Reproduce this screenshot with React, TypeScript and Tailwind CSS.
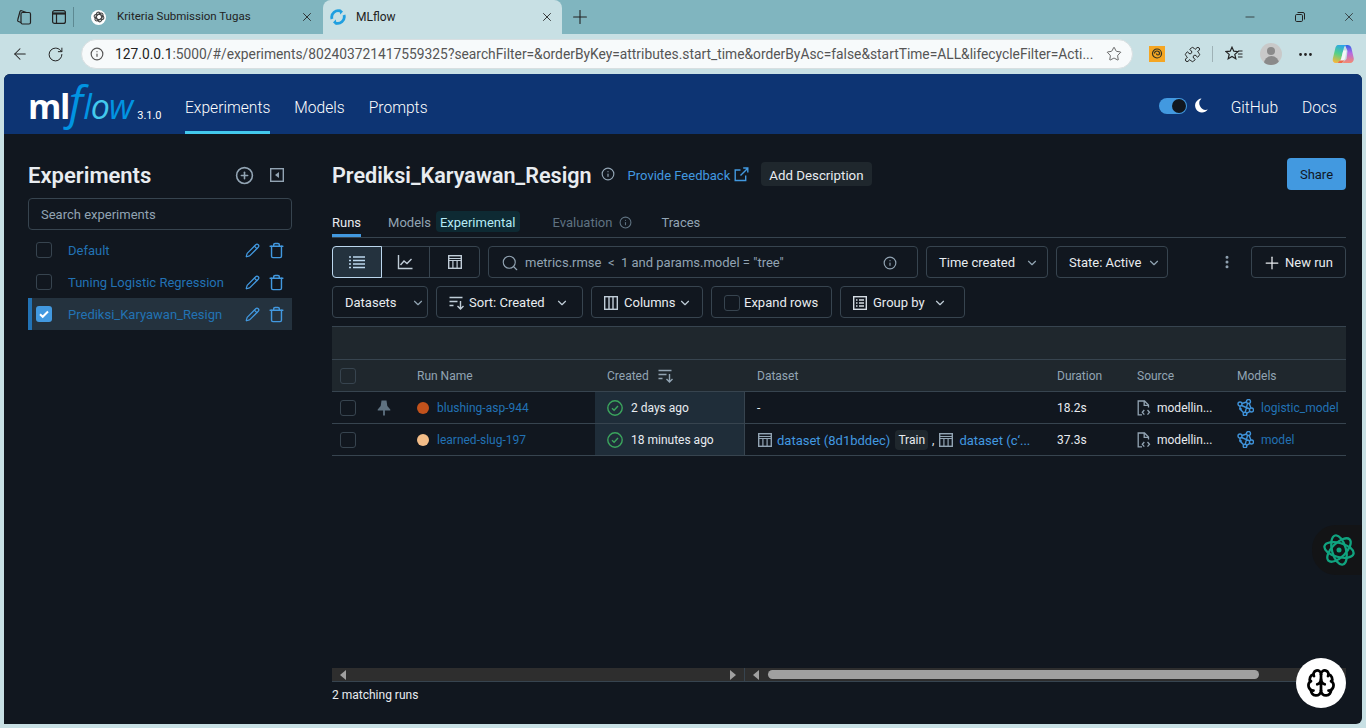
import React from "react";
import {
  Search, Info, Pencil, Trash, CirclePlus, ChevronDown, Plus, X, ArrowLeft, RotateCw, Star, Puzzle, Brain, EllipsisVertical, Ellipsis, Minus,
} from "lucide-react";

const TableIcon = ({ s = 16, c = "currentColor" }: { s?: number; c?: string }) => (
  <svg width={s} height={s} viewBox="0 0 16 16" fill="none" stroke={c} strokeWidth="1.4" className="shrink-0">
    <rect x="1.700" y="1.700" width="12.600" height="12.600" />
    <path d="M1.700 4.500h12.600M1.700 6.500h12.600M5.900 6.500v7.800M10.100 6.500v7.800" strokeWidth="1.200" />
  </svg>
);
const ListIcon = () => (
  <svg width="18" height="16" viewBox="0 0 18 16" fill="none" stroke="#bcd7ee" strokeWidth="1.4">
    <path d="M5 3h12M5 6.500h12M5 10h12M5 13.500h12M1 3h2M1 6.500h2M1 10h2M1 13.500h2" />
  </svg>
);
const ChartIcon = () => (
  <svg width="16" height="16" viewBox="0 0 16 16" fill="none" stroke="#c0cdd8" strokeWidth="1.4">
    <path d="M1.500 1v13.500H15.500" />
    <path d="M3.500 11l3.500-4 3 2.500 4.500-4.500" />
  </svg>
);
const SortIcon = ({ c = "#c0cdd8" }: { c?: string }) => (
  <svg width="16" height="14" viewBox="0 0 16 14" fill="none" stroke={c} strokeWidth="1.400" className="shrink-0">
    <path d="M0.500 1.500h13M0.500 5.500h8M0.500 9.500h4" />
    <path d="M11.500 5v8M8.500 10l3 3 3-3" />
  </svg>
);
const ColumnsIcon = () => (
  <svg width="14" height="14" viewBox="0 0 14 14" fill="none" stroke="#c0cdd8" strokeWidth="1.400" className="shrink-0">
    <rect x="0.700" y="0.700" width="12.600" height="12.600" />
    <path d="M5 0.700v12.600M9 0.700v12.600" />
  </svg>
);
const GroupIcon = () => (
  <svg width="14" height="14" viewBox="0 0 14 14" fill="none" stroke="#d5dde4" strokeWidth="1.400" className="shrink-0">
    <rect x="0.700" y="0.700" width="12.600" height="12.600" />
    <path d="M3 4h1.500M6 4h5M3 7h1.500M6 7h5M3 10h1.500M6 10h5" />
  </svg>
);
const ExternalIcon = () => (
  <svg width="15" height="15" viewBox="0 0 15 15" fill="none" stroke="#4299e0" strokeWidth="1.400">
    <path d="M11.700 8.500v5H1.200V3h5.300" />
    <path d="M6.500 8.500L13.800 1.200M9.200 1h4.600v4.600" />
  </svg>
);
const CollapseIcon = () => (
  <svg width="14" height="14" viewBox="0 0 14 14" className="shrink-0">
    <rect x="0.700" y="0.700" width="12.600" height="12.600" fill="none" stroke="#92a4b3" strokeWidth="1.400" />
    <path d="M9 4v6L5 7z" fill="#92a4b3" />
  </svg>
);
const PinIcon = () => (
  <svg width="14" height="16" viewBox="0 0 14 16" fill="#5f7281">
    <path d="M4.500 0.500h5l0.800 5.500 3 3.500v1H0.700v-1l3-3.500z" />
    <rect x="6.100" y="10" width="1.800" height="5.500" />
  </svg>
);
const CheckOk = () => (
  <svg width="16" height="16" viewBox="0 0 16 16" fill="none" stroke="#3ba55d" strokeWidth="1.400" className="shrink-0">
    <circle cx="8" cy="8" r="7.200" />
    <path d="M5 8.300l2.100 2L11 6" />
  </svg>
);
const SourceIcon = () => (
  <svg width="14" height="16" viewBox="0 0 14 16" fill="none" stroke="#92a4b3" strokeWidth="1.300" className="shrink-0">
    <path d="M5 14.800H1.200V1h6.300l4 4v2.500" />
    <path d="M7.200 1v4.300h4.300" />
    <path d="M7.300 10l-2 2.300 2 2.300M10.500 10l2 2.300-2 2.300" />
  </svg>
);
const ModelIcon = () => (
  <svg width="17" height="17" viewBox="0 0 17 17" fill="none" stroke="#3f93da" strokeWidth="1.400" className="shrink-0">
    <circle cx="3" cy="5" r="2" />
    <circle cx="11.500" cy="2.500" r="2" />
    <circle cx="14.500" cy="11" r="2" />
    <circle cx="8" cy="15" r="1.800" />
    <circle cx="3.500" cy="10" r="0.600" />
    <path d="M5 4.500l4.500-1.500M12.200 4.500l1.700 4.500M13 12.300l-3.500 2M6.600 13.800L3.500 10.500M3 7v3M4.500 6.500L13 10M10.500 4.300L8.300 13.200" />
  </svg>
);
const AtomIcon = () => (
  <svg width="32" height="34" viewBox="0 0 32 34" fill="none" stroke="#10a37f" strokeWidth="2.300">
    <ellipse cx="16" cy="17" rx="15" ry="7" transform="rotate(15 16 17)" />
    <ellipse cx="16" cy="17" rx="15" ry="7" transform="rotate(75 16 17)" />
    <ellipse cx="16" cy="17" rx="15" ry="7" transform="rotate(135 16 17)" />
    <circle cx="16" cy="17" r="2.500" fill="#10a37f" stroke="none" />
  </svg>
);
const Knot = () => (
  <span className="flex h-[15px] w-[15px] items-center justify-center rounded-full bg-white">
    <svg width="12" height="12" viewBox="0 0 32 34" fill="none" stroke="#444" strokeWidth="3">
      <ellipse cx="16" cy="17" rx="14" ry="7" transform="rotate(15 16 17)" />
      <ellipse cx="16" cy="17" rx="14" ry="7" transform="rotate(75 16 17)" />
      <ellipse cx="16" cy="17" rx="14" ry="7" transform="rotate(135 16 17)" />
    </svg>
  </span>
);
const Spinner = () => (
  <svg width="16" height="16" viewBox="0 0 16 16" fill="none" stroke="#1f9fe0" strokeWidth="2.800">
    <path d="M2 10A6.500 6.500 0 0 1 11 2.300" />
    <path d="M14 6A6.500 6.500 0 0 1 5 13.700" />
    <path d="M9.500 0l3.500 2.500-2.800 3z" fill="#1f9fe0" stroke="none" />
    <path d="M6.500 16L3 13.500l2.800-3z" fill="#1f9fe0" stroke="none" />
  </svg>
);
const Copilot = () => (
  <svg width="22" height="22" viewBox="0 0 22 22">
    <defs>
      <linearGradient id="cp1" x1="0.600" y1="0" x2="0.300" y2="1">
        <stop offset="0" stopColor="#2aa5e8" />
        <stop offset="0.500" stopColor="#52d08a" />
        <stop offset="1" stopColor="#f5b83a" />
      </linearGradient>
      <linearGradient id="cp2" x1="0.500" y1="0" x2="0.500" y2="1">
        <stop offset="0" stopColor="#2d62e8" />
        <stop offset="0.450" stopColor="#b56ae2" />
        <stop offset="1" stopColor="#f58a70" />
      </linearGradient>
    </defs>
    <path d="M13 2h2.500c2 0 3.300 1 3.900 3l2.300 10c.5 2.700-1 5-3.700 5h-7.500l4-4 1-8z" fill="url(#cp2)" />
    <path d="M6 2h9c-1.500 0-2.500 1-3 2.500L9 16c-.6 2.500-2 4-4.500 4H4c-2.500 0-3.700-2-3.200-4.300L3 6.500C3.500 3.500 4.500 2 6 2z" fill="url(#cp1)" />
    <path d="M11.200 7.500h3.300l-1.300 7c-.3 1.500-1 3-2.500 3H7.500c1 0 1.700-1 2-2.500z" fill="#f4f6f8" />
    <path d="M8 17.500h4.500L10 20H5.500z" fill="#ef6a4a" />
  </svg>
);
const FavStar = () => (
  <svg width="18" height="16" viewBox="0 0 18 16" fill="none" stroke="#222" strokeWidth="1.200">
    <path d="M7 1.200l1.800 4 4.200.4-3.200 2.800 1 4.300L7 10.400l-3.800 2.300 1-4.300L1 5.600l4.200-.4z" />
    <path d="M13 5h4.500M13 8h4.500M13 11h4.500" />
  </svg>
);
const TabsIcon = () => (
  <svg width="16" height="16" viewBox="0 0 16 16" fill="none" stroke="#222" strokeWidth="1.200">
    <rect x="5" y="3.500" width="9.500" height="11.500" rx="1.500" />
    <path d="M5 13.500l-2.500-1a1.200 1.200 0 0 1-.8-1.500L4 2.500A1.200 1.200 0 0 1 5.500 1.700l5 1.800" />
  </svg>
);
const WindowIcon = () => (
  <svg width="14" height="14" viewBox="0 0 14 14" fill="none" stroke="#222" strokeWidth="1.200">
    <rect x="0.600" y="0.600" width="12.800" height="12.800" rx="2" />
    <path d="M0.600 3.500h12.800" strokeWidth="2.200" />
    <path d="M4.500 3.500v9.900" />
  </svg>
);
const RestoreIcon = () => (
  <svg width="10" height="10" viewBox="0 0 10 10" fill="none" stroke="#222" strokeWidth="1">
    <rect x="0.500" y="2.500" width="7" height="7" rx="1.200" />
    <path d="M2.500 .5h5.500a1.500 1.500 0 0 1 1.500 1.500v5.500" />
  </svg>
);
const Crescent = () => (
  <svg width="14" height="15" viewBox="0 0 14 15" fill="#fff" className="shrink-0">
    <path d="M7.500 0.500A7 7 0 1 0 13.800 11.500 6.500 6.500 0 0 1 7.500 0.500z" />
  </svg>
);

const Box = ({ checked = false }: { checked?: boolean }) =>
  checked ? (
    <span className="flex h-4 w-4 shrink-0 items-center justify-center rounded-[3px] bg-[#4299e0]">
      <svg width="12" height="12" viewBox="0 0 12 12" fill="none" stroke="#fff" strokeWidth="2">
        <path d="M2 6.300l2.700 2.500L10 3.500" />
      </svg>
    </span>
  ) : (
    <span className="h-4 w-4 shrink-0 rounded-[3px] border border-[#37444f]" />
  );

const Btn = ({ w, children, className = "" }: { w: string; children: React.ReactNode; className?: string }) => (
  <div className={`flex h-8 items-center rounded border border-[#37444f] pt-px text-[13px] text-[#e8ecf0] ${w} ${className}`}>{children}</div>
);

const Exp = ({ name, active = false }: { name: string; active?: boolean }) => (
  <div className={`flex h-8 items-center ${active ? "border-l-4 border-[#2272b4] bg-[#24323e] pl-1" : "pl-2"} pr-[7px]`}>
    <Box checked={active} />
    <span className="ml-4 flex-1 pt-[2px] text-[13px] text-[#2272b4]">{name}</span>
    <Pencil size={15} color="#4299e0" className="mr-[8px]" />
    <Trash size={17} color="#4299e0" />
  </div>
);

const Row = ({
  dot, name, pin = false, created, dataset, dur, model,
}: { dot: string; name: string; pin?: boolean; created: string; dataset: React.ReactNode; dur: string; model: string }) => (
  <div className="flex h-8 items-stretch border-b border-[#37444f] text-xs text-[#e8ecf0]">
    <div className="flex w-10 items-center pl-2"><Box /></div>
    <div className="flex w-[33px] items-center pl-[5px]">{pin && <PinIcon />}</div>
    <div className="flex w-[190px] items-center pl-3">
      <span className="h-3 w-3 rounded-full" style={{ backgroundColor: dot }} />
      <span className="ml-2 text-[#2272b4]">{name}</span>
    </div>
    <div className="flex w-[150px] items-center border-r border-[#37444f] bg-[#1f2d39] pl-3">
      <CheckOk />
      <span className="ml-2">{created}</span>
    </div>
    <div className="flex w-[300px] items-center pl-3">{dataset}</div>
    <div className="flex w-20 items-center pl-3">{dur}</div>
    <div className="flex w-[100px] items-center pl-3">
      <SourceIcon />
      <span className="ml-[6px]">modellin...</span>
    </div>
    <div className="flex flex-1 items-center pl-3">
      <ModelIcon />
      <span className="ml-[7px] text-[#2272b4]">{model}</span>
    </div>
  </div>
);

export default function App() {
  return (
    <div className="relative flex h-[728px] w-[1366px] flex-col overflow-hidden bg-[#c8e0e4] font-['Roboto','Liberation_Sans',sans-serif]">
      {/* Tab strip */}
      <div className="flex h-[34px] items-end bg-[#80b5bf] text-[11.500px] text-[#222]">
        <div className="flex h-full w-[73px] items-center pl-4">
          <TabsIcon />
          <span className="ml-5"><WindowIcon /></span>
        </div>
        <div className="mb-[7px] h-5 w-px bg-[#5d8992]" />
        <div className="flex h-full w-[249px] items-center pl-[17px] pr-[9px]">
          <Knot />
          <span className="ml-[11px] flex-1">Kriteria Submission Tugas</span>
          <X size={14} strokeWidth={1.500} />
        </div>
        <div className="flex h-[34px] w-[239px] items-center rounded-t-lg bg-[#c8e0e4] pl-[7px] pr-[8px]">
          <Spinner />
          <span className="ml-[10px] flex-1 text-xs">MLflow</span>
          <X size={14} strokeWidth={1.500} />
        </div>
        <div className="flex h-full items-center pl-[7px]"><Plus size={22} strokeWidth={1.200} /></div>
        <div className="flex h-full flex-1 items-center justify-end pr-[10px]">
          <Minus size={14} strokeWidth={1.300} className="mr-[38px]" />
          <span className="mr-[37px]"><RestoreIcon /></span>
          <X size={14} strokeWidth={1.300} />
        </div>
      </div>
      {/* Address bar */}
      <div className="flex h-10 items-center text-[#222]">
        <div className="flex w-[81px] items-center pl-[11px]">
          <ArrowLeft size={18} strokeWidth={1.400} />
          <RotateCw size={17} strokeWidth={1.400} className="ml-[18px]" />
        </div>
        <div className="flex h-[30px] w-[1052px] items-center rounded-full border border-[#d8dfe1] bg-[#f7fafb] pl-[8px] pr-[10px]">
          <Info size={14} color="#555" />
          <span className="ml-[11px] flex-1 truncate text-[13.800px] text-[#222]">
            127.0.0.1<span className="text-[#555]">:5000/#/experiments/802403721417559325?searchFilter=&amp;orderByKey=attributes.start_time&amp;orderByAsc=false&amp;startTime=ALL&amp;lifecycleFilter=Acti...</span>
          </span>
          <Star size={16} strokeWidth={1.200} color="#444" className="ml-2" />
        </div>
        <div className="flex flex-1 items-center pl-4">
          <span className="flex h-4 w-4 items-center justify-center bg-[#f5a623]">
            <svg width="12" height="12" viewBox="0 0 12 12" fill="none" stroke="#332" strokeWidth="1.200">
              <circle cx="6" cy="5.500" r="4.500" />
              <path d="M3.500 5.500a2.500 2.500 0 0 1 5 0a1.500 1.500 0 0 1-3 0" />
            </svg>
          </span>
          <Puzzle size={17} strokeWidth={1.400} className="ml-[19px]" />
          <span className="ml-[11px] h-4 w-px bg-[#9fb2b6]" />
          <span className="ml-[12px]"><FavStar /></span>
          <span className="relative ml-[17px] flex h-[22px] w-[22px] items-center justify-center overflow-hidden rounded-full bg-[#c9c9c9]">
            <span className="absolute top-[4px] h-2 w-2 rounded-full bg-[#8a8a8a]" />
            <span className="absolute top-[13px] h-3 w-[15px] rounded-t-full bg-[#8a8a8a]" />
          </span>
          <Ellipsis size={17} className="ml-[15px]" />
          <span className="ml-[18px]"><Copilot /></span>
        </div>
      </div>
      {/* Page */}
      <div className="mx-1 mb-1 flex flex-1 flex-col overflow-hidden rounded-t-md rounded-br-md bg-[#11171f]">
        <header className="flex h-[60px] items-center bg-[#0d3473] pl-6 pr-[25px] pt-1 text-white">
          <div className="-mt-[9px] flex w-[157px] items-baseline">
            <span className="font-['Open_Sans',sans-serif] text-[34px] font-bold leading-none tracking-[-1.500px]">ml</span>
            <span className="font-['Open_Sans',sans-serif] text-[46px] font-normal italic leading-none text-[#0194e2]">f</span>
            <span className="font-['Open_Sans',sans-serif] text-[34px] font-normal italic leading-none tracking-[-1px] text-[#0194e2]">l<span className="text-[#43c9ed]">o</span>w</span>
            <span className="ml-[5px] text-[11px]">3.1.0</span>
          </div>
          <nav className="flex h-full items-center gap-6 self-stretch text-[15.600px] font-light">
            <span className="flex h-full items-center border-b-[3px] border-[#43c9ed] pt-[9px]">Experiments</span>
            <span className="pt-[6px]">Models</span>
            <span className="pt-[6px]">Prompts</span>
          </nav>
          <div className="flex flex-1 items-center justify-end text-[15.600px] font-light">
            <span className="flex h-4 w-[28px] items-center justify-end rounded-full bg-[#4299e0] pr-[1px]">
              <span className="h-[14px] w-[14px] rounded-full bg-[#11171f]" />
            </span>
            <span className="ml-[7px]"><Crescent /></span>
            <span className="ml-[23px] pt-[6px]">GitHub</span>
            <span className="ml-6 pt-[6px]">Docs</span>
          </div>
        </header>
        <div className="flex flex-1 pl-6 pr-4 text-[#e8ecf0]">
          {/* Sidebar */}
          <aside className="w-[264px] pt-6">
            <div className="flex h-[34px] items-center pr-2">
              <h2 className="flex-1 pt-[2px] text-[22px] font-semibold leading-none">Experiments</h2>
              <CirclePlus size={19} color="#92a4b3" className="mr-[16px]" />
              <CollapseIcon />
            </div>
            <div className="mt-[6px] flex h-8 items-center rounded border border-[#37444f] pl-3 pt-[2px] text-[13px] text-[#92a4b3]">Search experiments</div>
            <div className="mt-[4px]">
              <Exp name="Default" />
              <Exp name="Tuning Logistic Regression" />
              <Exp name="Prediksi_Karyawan_Resign" active />
            </div>
          </aside>
          {/* Main */}
          <main className="ml-10 flex flex-1 flex-col">
            <div className="mt-6 flex h-8 items-center">
              <h1 className="pt-[3px] text-[21.600px] font-semibold leading-none">Prediksi_Karyawan_Resign</h1>
              <Info size={14} color="#92a4b3" className="ml-[9px]" />
              <span className="ml-[13px] pt-[3px] text-[13px] text-[#4299e0]">Provide Feedback</span>
              <span className="ml-[4px]"><ExternalIcon /></span>
              <span className="ml-[12px] flex h-6 items-center rounded bg-[#1f272d] px-2 pt-[3px] text-[13.300px]">Add Description</span>
              <span className="ml-auto flex h-8 w-[59px] items-center justify-center rounded bg-[#4299e0] pt-px text-[13px] text-[#11171f]">Share</span>
            </div>
            <div className="mt-[16px] flex h-[32px] items-stretch border-b border-[#37444f] text-[13px]">
              <span className="flex items-center border-b-[3px] border-[#4299e0] pt-[5px]">Runs</span>
              <span className="ml-[27px] flex items-center pt-[2px] text-[#92a4b3]">Models</span>
              <span className="mb-[5px] ml-[5px] mt-[5px] flex items-center rounded bg-[#0e2a33] px-1 pt-[2px] text-[#b5eaf5]">Experimental</span>
              <span className="ml-[33px] flex items-center pt-[2px] text-[#5f7281]">Evaluation<Info size={13} className="ml-[7px]" /></span>
              <span className="ml-[29px] flex items-center pt-[2px] text-[#92a4b3]">Traces</span>
            </div>
            <div className="mt-2 flex h-8 items-center">
              <div className="flex h-8 w-[148px] rounded border border-[#37444f]">
                <span className="-m-px flex w-[50px] items-center justify-center rounded-l border border-[#bcd7ee] bg-[#24323e]"><ListIcon /></span>
                <span className="flex w-[49px] items-center justify-center border-r border-[#37444f]"><ChartIcon /></span>
                <span className="flex flex-1 items-center justify-center"><TableIcon c="#c0cdd8" /></span>
              </div>
              <Btn w="w-[430px]" className="ml-2 pl-[12px] pr-[20px]">
                <Search size={18} strokeWidth={1.500} color="#92a4b3" />
                <span className="ml-[6px] flex-1 text-[#92a4b3]">metrics.rmse &nbsp;&lt;&nbsp; 1 and params.model = "tree"</span>
                <Info size={14} color="#92a4b3" />
              </Btn>
              <Btn w="w-[122px]" className="ml-2 pl-3">Time created<ChevronDown size={14} color="#92a4b3" className="ml-[10px]" /></Btn>
              <Btn w="w-[112px]" className="ml-2 pl-3">State: Active<ChevronDown size={14} color="#92a4b3" className="ml-[6px]" /></Btn>
              <EllipsisVertical size={16} color="#92a4b3" strokeWidth={2.500} className="ml-[51px]" />
              <Btn w="w-[95px]" className="ml-4 pl-[10px]"><Plus size={20} strokeWidth={1.500} /><span className="ml-[3px]">New run</span></Btn>
            </div>
            <div className="mt-2 flex h-8 items-center gap-2">
              <Btn w="w-[96px]" className="pl-3">Datasets<ChevronDown size={14} color="#92a4b3" className="ml-[14px]" /></Btn>
              <Btn w="w-[147px]" className="pl-3"><SortIcon /><span className="ml-[4px]">Sort: Created</span><ChevronDown size={14} color="#c0cdd8" className="ml-[10px]" /></Btn>
              <Btn w="w-[112px]" className="pl-3"><ColumnsIcon /><span className="ml-[6px]">Columns</span><ChevronDown size={14} color="#c0cdd8" className="ml-[2px]" /></Btn>
              <Btn w="w-[121px]" className="pl-3"><Box /><span className="ml-[4px]">Expand rows</span></Btn>
              <Btn w="w-[125px]" className="pl-3"><GroupIcon /><span className="ml-[6px]">Group by</span><ChevronDown size={14} color="#c0cdd8" className="ml-[8px]" /></Btn>
            </div>
            {/* Table */}
            <div className="mt-2 flex flex-1 flex-col">
              <div className="h-[34px] border-y border-[#37444f] bg-[#1f272d]" />
              <div className="flex h-8 items-center border-b border-[#37444f] bg-[#1f272d] text-xs text-[#92a4b3]">
                <div className="flex w-[73px] pl-2"><Box /></div>
                <div className="w-[190px] pl-3">Run Name</div>
                <div className="flex w-[150px] items-center pl-3">Created<span className="ml-[9px]"><SortIcon c="#92a4b3" /></span></div>
                <div className="w-[300px] pl-3">Dataset</div>
                <div className="w-20 pl-3">Duration</div>
                <div className="w-[100px] pl-3">Source</div>
                <div className="flex-1 pl-3">Models</div>
              </div>
              <Row dot="#c2521c" name="blushing-asp-944" pin created="2 days ago" dataset="-" dur="18.2s" model="logistic_model" />
              <Row
                dot="#f3bd88"
                name="learned-slug-197"
                created="18 minutes ago"
                dur="37.3s"
                model="model"
                dataset={
                  <>
                    <TableIcon c="#92a4b3" />
                    <span className="ml-[4px] pt-[2px] text-[13px] text-[#4299e0]">dataset (8d1bddec)</span>
                    <span className="ml-[5px] flex h-5 items-center rounded bg-[#1f272d] px-[3px]">Train</span>
                    <span className="ml-[4px]">,</span>
                    <span className="ml-[4px]"><TableIcon c="#92a4b3" /></span>
                    <span className="ml-[5px] pt-[2px] text-[13px] text-[#4299e0]">dataset (c‘...</span>
                  </>
                }
              />
              <div className="flex-1" />
              <div className="flex h-[14px] border-b border-[#37444f] bg-[#2e2e2e]">
                <div className="flex w-[413px] items-center justify-between border-r border-[#37444f] px-2">
                  <span className="h-0 w-0 border-y-[5px] border-r-[6px] border-y-transparent border-r-[#a0a0a0]" />
                  <span className="h-0 w-0 border-y-[5px] border-l-[6px] border-y-transparent border-l-[#a0a0a0]" />
                </div>
                <div className="flex flex-1 items-center pl-2">
                  <span className="h-0 w-0 border-y-[5px] border-r-[6px] border-y-transparent border-r-[#a0a0a0]" />
                  <span className="ml-[9px] h-[9px] w-[491px] rounded-full bg-[#a0a0a0]" />
                </div>
              </div>
              <div className="flex h-[42px] items-start pt-[6px] text-xs leading-[14px]">2 matching runs</div>
            </div>
          </main>
        </div>
      </div>
      {/* Floating */}
      <div className="absolute left-[1312px] top-[525px] flex h-[50px] w-[50px] items-center justify-center rounded-l-3xl bg-[#131416] pl-[4px]">
        <AtomIcon />
      </div>
      <div className="absolute left-[1296px] top-[658px] flex h-[50px] w-[50px] items-center justify-center rounded-full bg-white">
        <Brain size={30} color="#000" strokeWidth={2.200} />
      </div>
    </div>
  );
}
